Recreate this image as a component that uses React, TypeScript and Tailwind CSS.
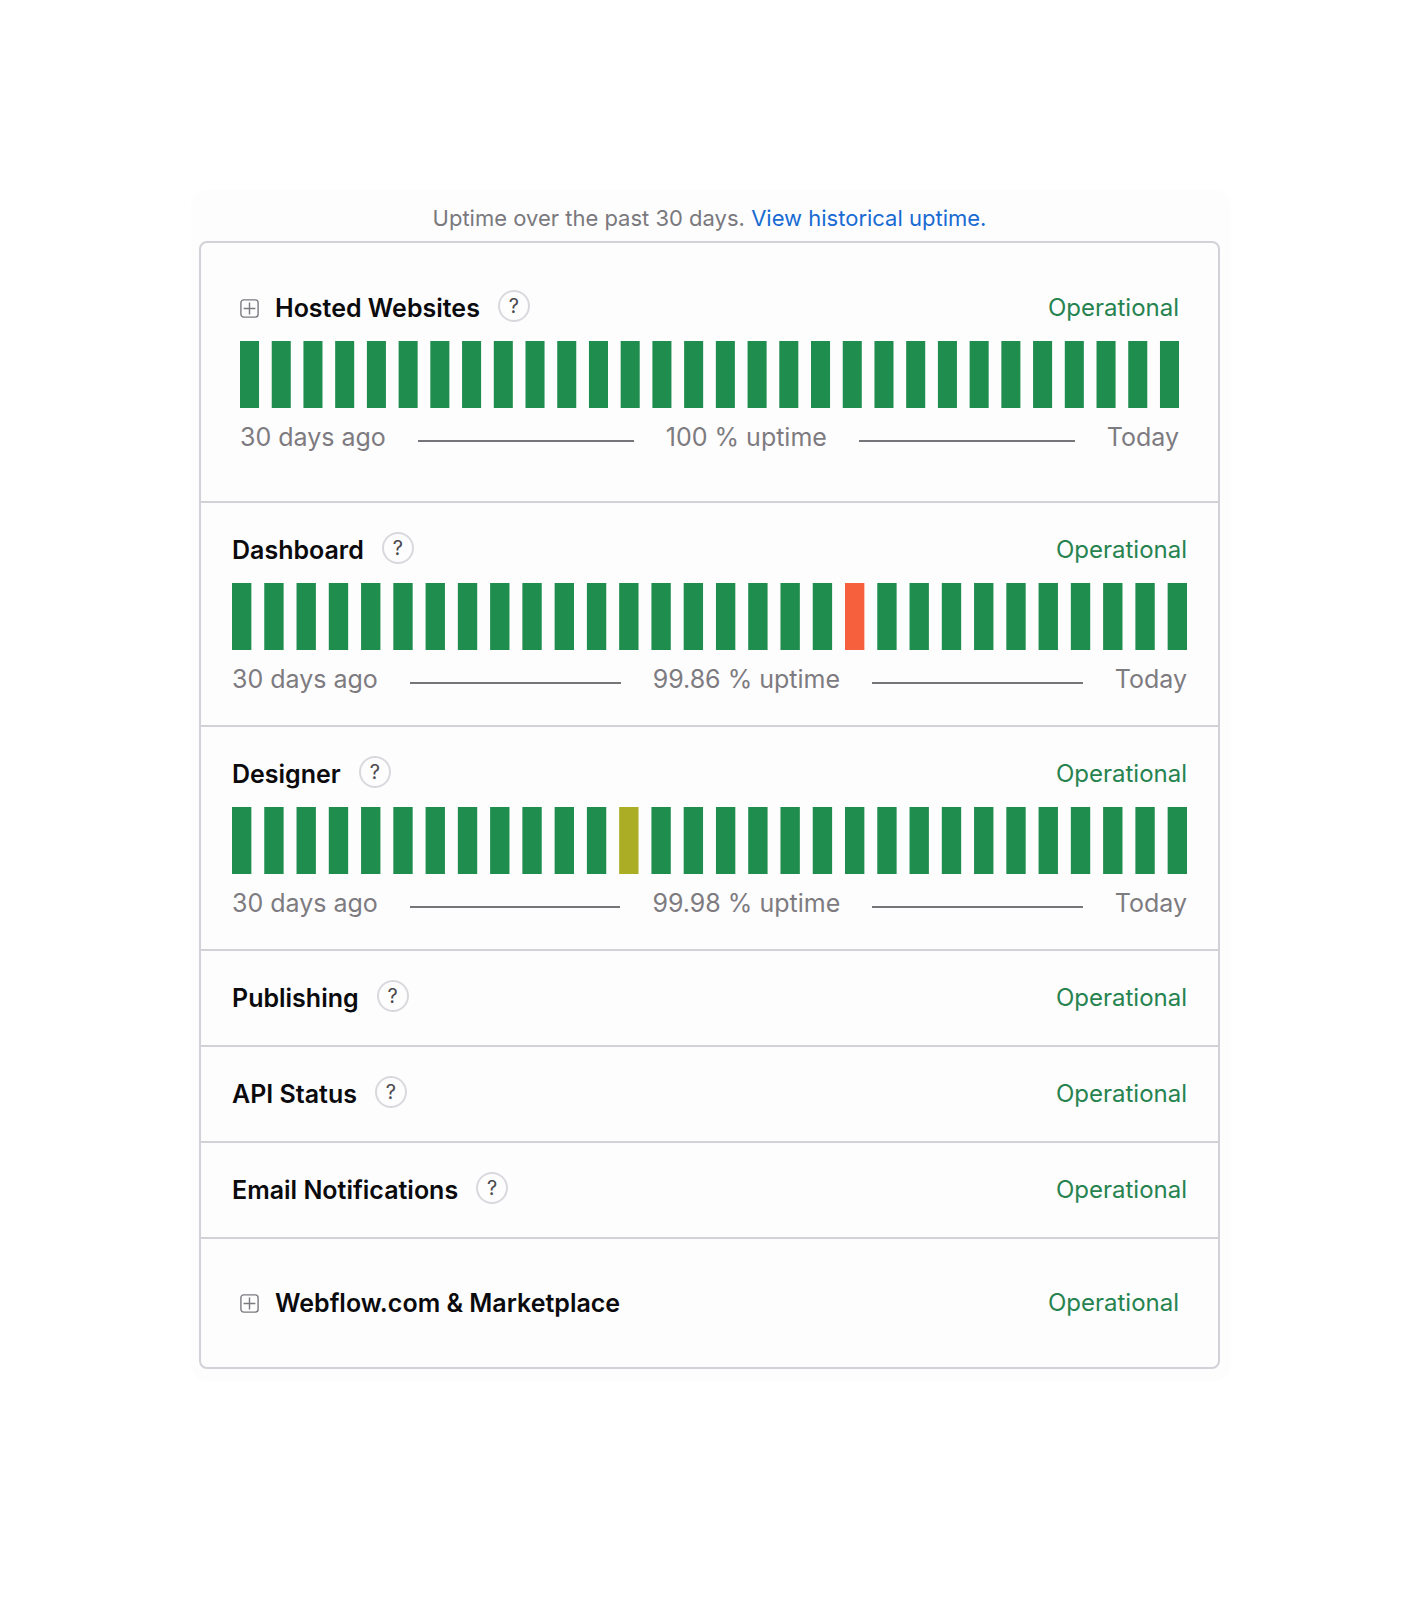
import React from 'react';

type DayStatus = 'ok' | 'partial' | 'outage';

interface Component {
  name: string;
  group?: boolean;
  help?: string;
  uptime?: string;
  incidents?: Record<number, DayStatus>;
}

const DAYS = 30;

const components: Component[] = [
  { name: 'Hosted Websites', group: true, help: 'About Hosted Websites', uptime: '100' },
  { name: 'Dashboard', help: 'About Dashboard', uptime: '99.86', incidents: { 19: 'outage' } },
  { name: 'Designer', help: 'About Designer', uptime: '99.98', incidents: { 12: 'partial' } },
  { name: 'Publishing', help: 'About Publishing' },
  { name: 'API Status', help: 'About API Status' },
  { name: 'Email Notifications', help: 'About Email Notifications' },
  { name: 'Webflow.com & Marketplace', group: true },
];

const barFill: Record<DayStatus, string> = {
  ok: 'fill-[#1f8d4e]',
  partial: 'fill-[#abae25]',
  outage: 'fill-[#f6603d]',
};

const rowPadding = ({ group, uptime }: Component) => {
  if (!group) return 'px-[31px] py-[29px]';
  return uptime ? 'px-[39px] py-[47px]' : 'px-[39px] py-[46px]';
};

const ExpandIcon: React.FC = () => (
  <svg viewBox="0 0 19 19" className="w-[19px] h-[19px]" fill="none" stroke="#7b7a80" strokeWidth="1.4" aria-hidden="true">
    <rect x="0.9" y="0.9" width="17.2" height="17.2" rx="2.8" />
    <path d="M9.5 3.6v11.8M3.6 9.5h11.8" />
  </svg>
);

const UptimeChart: React.FC<{ incidents?: Record<number, DayStatus> }> = ({ incidents = {} }) => (
  <svg viewBox="0 0 444 34" preserveAspectRatio="none" className="block w-full h-[67px]" role="img" aria-label="Daily uptime">
    {Array.from({ length: DAYS }, (_, i) => (
      <rect key={i} x={i * 15} y="0" width="9" height="34" className={barFill[incidents[i] ?? 'ok']} />
    ))}
  </svg>
);

const UptimeLegend: React.FC<{ uptime: string }> = ({ uptime }) => (
  <div className="flex items-center gap-8 mt-[13px] mb-px text-[25px] leading-8 text-[#7d7b80] whitespace-nowrap">
    <span>30 days ago</span>
    <span className="flex-1 h-[2px] mt-2 bg-[#77757a]" />
    <span>{uptime} % uptime</span>
    <span className="flex-1 h-[2px] mt-2 bg-[#77757a]" />
    <span>Today</span>
  </div>
);

const ComponentRow: React.FC<{ component: Component }> = ({ component }) => {
  const { name, group, help, uptime, incidents } = component;

  return (
    <li className={rowPadding(component)}>
      <div className="flex items-center h-9">
        {group && (
          <button type="button" className="mr-4 cursor-pointer" aria-label={`Expand ${name}`}>
            <ExpandIcon />
          </button>
        )}
        <h2 className="text-[25px] leading-9 font-semibold text-[#0b0a0d]">{name}</h2>
        {help && (
          <button
            type="button"
            className="w-8 h-8 ml-[18px] mb-1 rounded-full border-2 border-[#dad8dd] text-xl leading-none text-[#4b494e] flex items-center justify-center cursor-pointer"
            aria-label={help}
          >
            ?
          </button>
        )}
        <span className="ml-auto text-2xl leading-9 text-[#26834f]">Operational</span>
      </div>
      {uptime && (
        <div className="mt-[15px]">
          <UptimeChart incidents={incidents} />
          <UptimeLegend uptime={uptime} />
        </div>
      )}
    </li>
  );
};

const App: React.FC = () => (
  <main className="min-h-screen bg-white py-[190px] font-['Inter',sans-serif]">
    <section className="max-w-[1040px] mx-auto pt-3 pb-3 pl-2 pr-[11px] rounded-2xl bg-[#fdfdfe]">
      <p className="mb-[7px] text-center text-[22px] leading-8 text-[#7a797d]">
        Uptime over the past 30 days.{' '}
        <a href="#history" className="text-[#176bd2]">View historical uptime.</a>
      </p>
      <ul className="border-2 border-[#d3d1d7] rounded-lg divide-y-2 divide-[#d3d1d7]">
        {components.map((component) => (
          <ComponentRow key={component.name} component={component} />
        ))}
      </ul>
    </section>
  </main>
);

export default App;
